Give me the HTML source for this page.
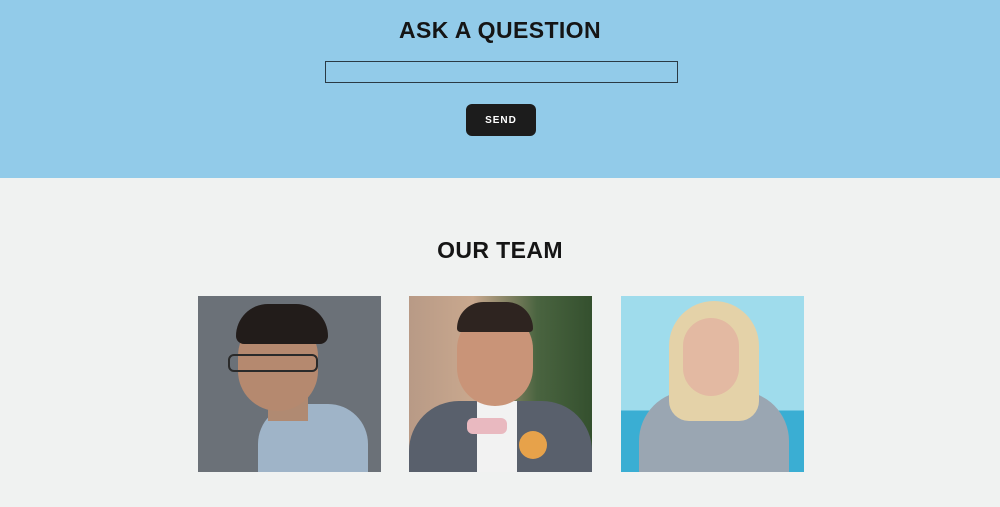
<!DOCTYPE html>
<html><head><style>
*{margin:0;padding:0;box-sizing:border-box}
body{width:1000px;height:507px;overflow:hidden;background:#f0f2f1;font-family:"Liberation Sans",sans-serif}
.top{position:absolute;left:0;top:0;width:1000px;height:178px;background:#92cbe9}
h1{position:absolute;width:1000px;text-align:center;font-size:23px;font-weight:bold;letter-spacing:0.4px;color:#151515}
.inp{position:absolute;left:325px;top:61px;width:353px;height:22px;border:1px solid #2a3a45}
.btn{position:absolute;left:466px;top:104px;width:70px;height:32px;background:#1c1c1c;border-radius:6px;color:#fff;font-size:10px;font-weight:bold;letter-spacing:1px;text-align:center;line-height:34px}
.ph{position:absolute;top:296px;width:183px;height:176px;overflow:hidden}
.ph div{position:absolute}
</style></head><body>
<div class="top"></div>
<h1 style="top:17px">ASK A QUESTION</h1>
<div class="inp"></div>
<div class="btn">SEND</div>
<h1 style="top:237px">OUR TEAM</h1>

<div class="ph" style="left:198px;background:#6b7178">
 <div style="left:60px;top:108px;width:110px;height:80px;background:#9fb4c8;border-radius:40px 40px 0 0"></div>
 <div style="left:70px;top:95px;width:40px;height:30px;background:#b08a72"></div>
 <div style="left:40px;top:20px;width:80px;height:95px;background:#b5896f;border-radius:40px"></div>
 <div style="left:38px;top:8px;width:92px;height:40px;background:#221c1a;border-radius:40px 40px 10px 10px"></div>
 <div style="left:30px;top:58px;width:90px;height:18px;border:2px solid #2a2a2a;border-radius:6px"></div>
</div>

<div class="ph" style="left:409px;background:linear-gradient(90deg,#b89a86 0,#c9a88e 35%,#4a6440 70%,#34502e 100%)">
 <div style="left:0;top:105px;width:183px;height:80px;background:#59606c;border-radius:50px 50px 0 0"></div>
 <div style="left:68px;top:105px;width:40px;height:80px;background:#f2f2f2"></div>
 <div style="left:58px;top:122px;width:40px;height:16px;background:#e9b9c0;border-radius:6px"></div>
 <div style="left:48px;top:15px;width:76px;height:95px;background:#c99478;border-radius:38px"></div>
 <div style="left:48px;top:6px;width:76px;height:30px;background:#2e2420;border-radius:38px 38px 5px 5px"></div>
 <div style="left:110px;top:135px;width:28px;height:28px;background:#e7a24a;border-radius:50%"></div>
</div>

<div class="ph" style="left:621px;background:linear-gradient(180deg,#9fdcec 0,#9fdcec 65%,#3aaed3 65%)">
 <div style="left:18px;top:95px;width:150px;height:90px;background:#9aa6b2;border-radius:50px 50px 0 0"></div>
 <div style="left:48px;top:5px;width:90px;height:120px;background:#e4d2a8;border-radius:45px 45px 20px 20px"></div>
 <div style="left:62px;top:22px;width:56px;height:78px;background:#e3b9a2;border-radius:28px"></div>
</div>
</body></html>
